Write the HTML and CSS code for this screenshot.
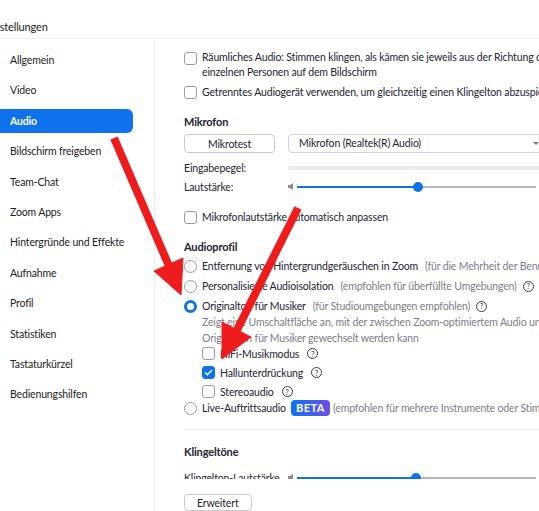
FILE: index.html
```html
<!DOCTYPE html>
<html lang="de">
<head>
	<meta charset="UTF-8">
	<meta name="viewport" content="width=device-width, initial-scale=1.0">
	<title>Einstellungen</title>
	<link rel="stylesheet" href="styles.css">
</head>
<body>
	<div class="window">
		<div class="titlebar"><span class="title">Einstellungen</span></div>
		<div class="layout">
			<nav class="sidebar">
				<div class="nav-item">Allgemein</div>
				<div class="nav-item">Video</div>
				<div class="nav-item active">Audio</div>
				<div class="nav-item">Bildschirm freigeben</div>
				<div class="nav-item">Team-Chat</div>
				<div class="nav-item">Zoom Apps</div>
				<div class="nav-item">Hintergründe und Effekte</div>
				<div class="nav-item">Aufnahme</div>
				<div class="nav-item">Profil</div>
				<div class="nav-item">Statistiken</div>
				<div class="nav-item">Tastaturkürzel</div>
				<div class="nav-item">Bedienungshilfen</div>
			</nav>

			<div class="main">
				<div class="scroll">
					<label class="check-row two-line">
						<span class="box"></span>
						<span>Räumliches Audio: Stimmen klingen, als kämen sie jeweils aus der Richtung der<br>einzelnen Personen auf dem Bildschirm</span>
					</label>
					<label class="check-row ring-device">
						<span class="box"></span>
						<span class="nowrap">Getrenntes Audiogerät verwenden, um gleichzeitig einen Klingelton abzuspielen</span>
					</label>

					<h2 class="section-title mic-title">Mikrofon</h2>
					<div class="field-row buttons">
						<button class="btn test-btn">Mikrotest</button>
						<div class="select">Mikrofon (Realtek(R) Audio)<span class="caret"></span></div>
					</div>
					<div class="field-row level">
						<span class="field-label">Eingabepegel:</span>
						<div class="level-bar"></div>
					</div>
					<div class="field-row">
						<span class="field-label">Lautstärke:</span>
						<div class="slider">
							<svg class="spk" width="6" height="7" viewBox="0 0 6 7"><path d="M0 2h2l3-2v7L2 5H0z" fill="#8a8a92"/></svg>
							<div class="track"><div class="fill" style="width: 50.8%"><span class="thumb"></span></div></div>
							<svg class="spk" width="9" height="7" viewBox="0 0 9 7"><path d="M0 2h2l3-2v7L2 5H0z" fill="#8a8a92"/></svg>
						</div>
					</div>
					<label class="check-row auto-vol">
						<span class="box"></span>
						<span>Mikrofonlautstärke automatisch anpassen</span>
					</label>

					<h2 class="section-title profile-title">Audioprofil</h2>
					<label class="radio-row">
						<span class="radio"></span>
						<span>Entfernung von Hintergrundgeräuschen in Zoom</span>
						<span class="hint">(für die Mehrheit der Benutzer empfohlen)</span>
					</label>
					<label class="radio-row">
						<span class="radio"></span>
						<span>Personalisierte Audioisolation</span>
						<span class="hint">(empfohlen für überfüllte Umgebungen)</span>
						<span class="help">?</span>
					</label>
					<label class="radio-row">
						<span class="radio checked"></span>
						<span>Originalton für Musiker</span>
						<span class="hint">(für Studioumgebungen empfohlen)</span>
						<span class="help">?</span>
					</label>
					<p class="desc">Zeigt eine Umschaltfläche an, mit der zwischen Zoom-optimiertem Audio und<br>Originalton für Musiker gewechselt werden kann</p>
					<div class="sub-options">
						<label class="sub-row">
							<span class="box"></span>
							<span>HiFi-Musikmodus</span>
							<span class="help">?</span>
						</label>
						<label class="sub-row">
							<span class="box checked"><svg width="9" height="7" viewBox="0 0 9 7"><path d="M1 3.5l2.3 2.3L8 1" fill="none" stroke="#fff" stroke-width="1.4"/></svg></span>
							<span>Hallunterdrückung</span>
							<span class="help">?</span>
						</label>
						<label class="sub-row">
							<span class="box"></span>
							<span>Stereoaudio</span>
							<span class="help">?</span>
						</label>
					</div>
					<label class="radio-row live">
						<span class="radio"></span>
						<span>Live-Auftrittsaudio</span>
						<span class="beta">BETA</span>
						<span class="hint tight">(empfohlen für mehrere Instrumente oder Stimmen)</span>
					</label>

					<div class="divider"></div>

					<h2 class="section-title ring-title">Klingeltöne</h2>
					<div class="field-row ring-row">
						<span class="field-label">Klingelton-Lautstärke</span>
						<div class="slider">
							<svg class="spk" width="6" height="7" viewBox="0 0 6 7"><path d="M0 2h2l3-2v7L2 5H0z" fill="#8a8a92"/></svg>
							<div class="track"><div class="fill" style="width: 49.6%"><span class="thumb"></span></div></div>
							<svg class="spk" width="9" height="7" viewBox="0 0 9 7"><path d="M0 2h2l3-2v7L2 5H0z" fill="#8a8a92"/></svg>
						</div>
					</div>
				</div>
				<div class="footer">
					<button class="btn">Erweitert</button>
				</div>
			</div>
		</div>

		<!-- rote Pfeile -->
		<svg class="arrows" width="539" height="511" viewBox="0 0 539 511">
			<g fill="#ee1c1c" stroke="#ee1c1c">
				<line x1="114" y1="138" x2="169" y2="266" stroke-width="8"/>
				<polygon points="181,295 154,271 183,258" stroke-width="1"/>
				<line x1="298" y1="208" x2="237" y2="330" stroke-width="8"/>
				<polygon points="222,359 222,322 251,337" stroke-width="1"/>
			</g>
		</svg>
	</div>
</body>
</html>
```

FILE: styles.css
```css
* {
	box-sizing: border-box;
}

body {
	margin: 0;
	font-family: Lato, "Open Sans", sans-serif;
	font-size: 10.5px;
	letter-spacing: -0.15px;
	color: #232333;
	background-color: #fff;
}

.window {
	position: relative;
	width: 539px;
	height: 511px;
	overflow: hidden;
}

.titlebar {
	height: 39px;
	padding-top: 20px;
	border-bottom: 1px solid #ececec;
	white-space: nowrap;
}

.title {
	display: inline-block;
	margin-left: -15px;
	font-size: 11px;
	color: #222;
}

.layout {
	display: flex;
	height: 472px;
}

/* Seitenleiste */
.sidebar {
	width: 155px;
	flex-shrink: 0;
	padding-top: 9px;
	border-right: 1px solid #ececec;
}

.nav-item {
	height: 24px;
	line-height: 24px;
	margin: 0 21px 6.4px -10px;
	padding-left: 20px;
	border-radius: 6px;
	color: #222;
	white-space: nowrap;
}

.nav-item.active {
	background-color: #0e72ed;
	color: #fff;
	font-weight: bold;
}

/* Inhalt */
.main {
	flex: 1;
	overflow: hidden;
	display: flex;
	flex-direction: column;
}

.scroll {
	height: 440px;
	flex-shrink: 0;
	overflow: hidden;
	padding-left: 29px;
}

.scroll > * {
	width: 364px;
}

.nowrap,
.radio-row,
.sub-row,
.check-row.two-line,
.desc {
	white-space: nowrap;
}

.check-row {
	display: flex;
	align-items: center;
	gap: 5px;
	line-height: 15px;
}

.check-row.two-line {
	align-items: flex-start;
	margin-top: 11px;
}

.check-row.two-line .box {
	margin-top: 2px;
}

.ring-device {
	margin-top: 5px;
}

.auto-vol {
	margin-top: 14px;
}

.box {
	width: 13px;
	height: 13px;
	flex-shrink: 0;
	border: 1px solid #9a9aa2;
	border-radius: 3px;
	background-color: #fff;
	display: flex;
	align-items: center;
	justify-content: center;
}

.box.checked {
	background-color: #0e72ed;
	border-color: #0e72ed;
}

.section-title {
	margin: 0;
	font-size: 11px;
	font-weight: bold;
	line-height: 16px;
}

.mic-title,
.profile-title,
.ring-title {
	margin-top: 14px;
}

.field-row {
	display: flex;
	align-items: center;
	height: 19px;
}

.field-row.buttons {
	margin-top: 4px;
	gap: 13px;
}

.field-row.level {
	margin-top: 5px;
}

.field-label {
	width: 104px;
	flex-shrink: 0;
	white-space: nowrap;
	overflow: hidden;
}

.btn {
	height: 19px;
	padding: 0 15px;
	font-family: inherit;
	font-size: 10.5px;
	letter-spacing: -0.15px;
	color: #232333;
	background-color: #fff;
	border: 1px solid #c9c9cf;
	border-radius: 4px;
}

.test-btn {
	width: 91px;
}

.select {
	position: relative;
	flex: 1;
	height: 19px;
	line-height: 17px;
	padding-left: 10px;
	border: 1px solid #d3d3d8;
	border-radius: 4px;
}

.caret {
	position: absolute;
	right: 8px;
	top: 7px;
	border-left: 3px solid transparent;
	border-right: 3px solid transparent;
	border-top: 3px solid #777;
}

.level-bar {
	flex: 1;
	height: 4px;
	border-radius: 2px;
	background-color: #ececef;
}

.slider {
	flex: 1;
	display: flex;
	align-items: center;
	gap: 3px;
}

.track {
	flex: 1;
	height: 2px;
	background-color: #b8b8be;
}

.fill {
	position: relative;
	height: 2px;
	background-color: #0e72ed;
}

.thumb {
	position: absolute;
	top: -4px;
	right: -5px;
	width: 10px;
	height: 10px;
	border-radius: 50%;
	background-color: #0e72ed;
}

/* Radiobuttons */
.radio-row {
	display: flex;
	align-items: center;
	height: 20px;
}

.profile-title + .radio-row {
	margin-top: 1px;
}

.radio {
	width: 13px;
	height: 13px;
	flex-shrink: 0;
	margin-right: 5px;
	border: 1px solid #9a9aa2;
	border-radius: 50%;
}

.radio.checked {
	border: 3.5px solid #0e72ed;
}

.hint {
	margin-left: 7px;
	color: #7c7c88;
}

.hint.tight {
	margin-left: 3px;
}

.help {
	display: inline-flex;
	align-items: center;
	justify-content: center;
	width: 11px;
	height: 11px;
	margin-left: 6px;
	border: 1px solid #3a3a44;
	border-radius: 50%;
	font-size: 8px;
	letter-spacing: 0;
	line-height: 1;
	color: #3a3a44;
}

.desc {
	margin: -2px 0 0 18px;
	line-height: 16px;
	color: #7c7c88;
}

.sub-options {
	margin-top: -2px;
	padding-left: 18px;
}

.sub-row {
	display: flex;
	align-items: center;
	gap: 5px;
	height: 19px;
}

.sub-row .help {
	margin-left: 3px;
}

.radio-row.live {
	height: 16px;
	margin-top: -1px;
}

.beta {
	height: 16px;
	line-height: 16px;
	margin-left: 5px;
	padding: 0 5px;
	border-radius: 4px;
	background: linear-gradient(90deg, #0e72ed, #6b4fe8);
	color: #fff;
	font-size: 11px;
	font-weight: bold;
	letter-spacing: 0.5px;
}

.divider {
	height: 1px;
	margin-top: 13px;
	background-color: #ececef;
}

.ring-row {
	margin-top: 8px;
}

.footer {
	padding-top: 15px;
	padding-left: 29px;
}

.footer .btn {
	height: 17px;
	padding: 0 12px;
}

/* Pfeile liegen über allem */
.arrows {
	position: absolute;
	top: 0;
	left: 0;
	pointer-events: none;
}
```
